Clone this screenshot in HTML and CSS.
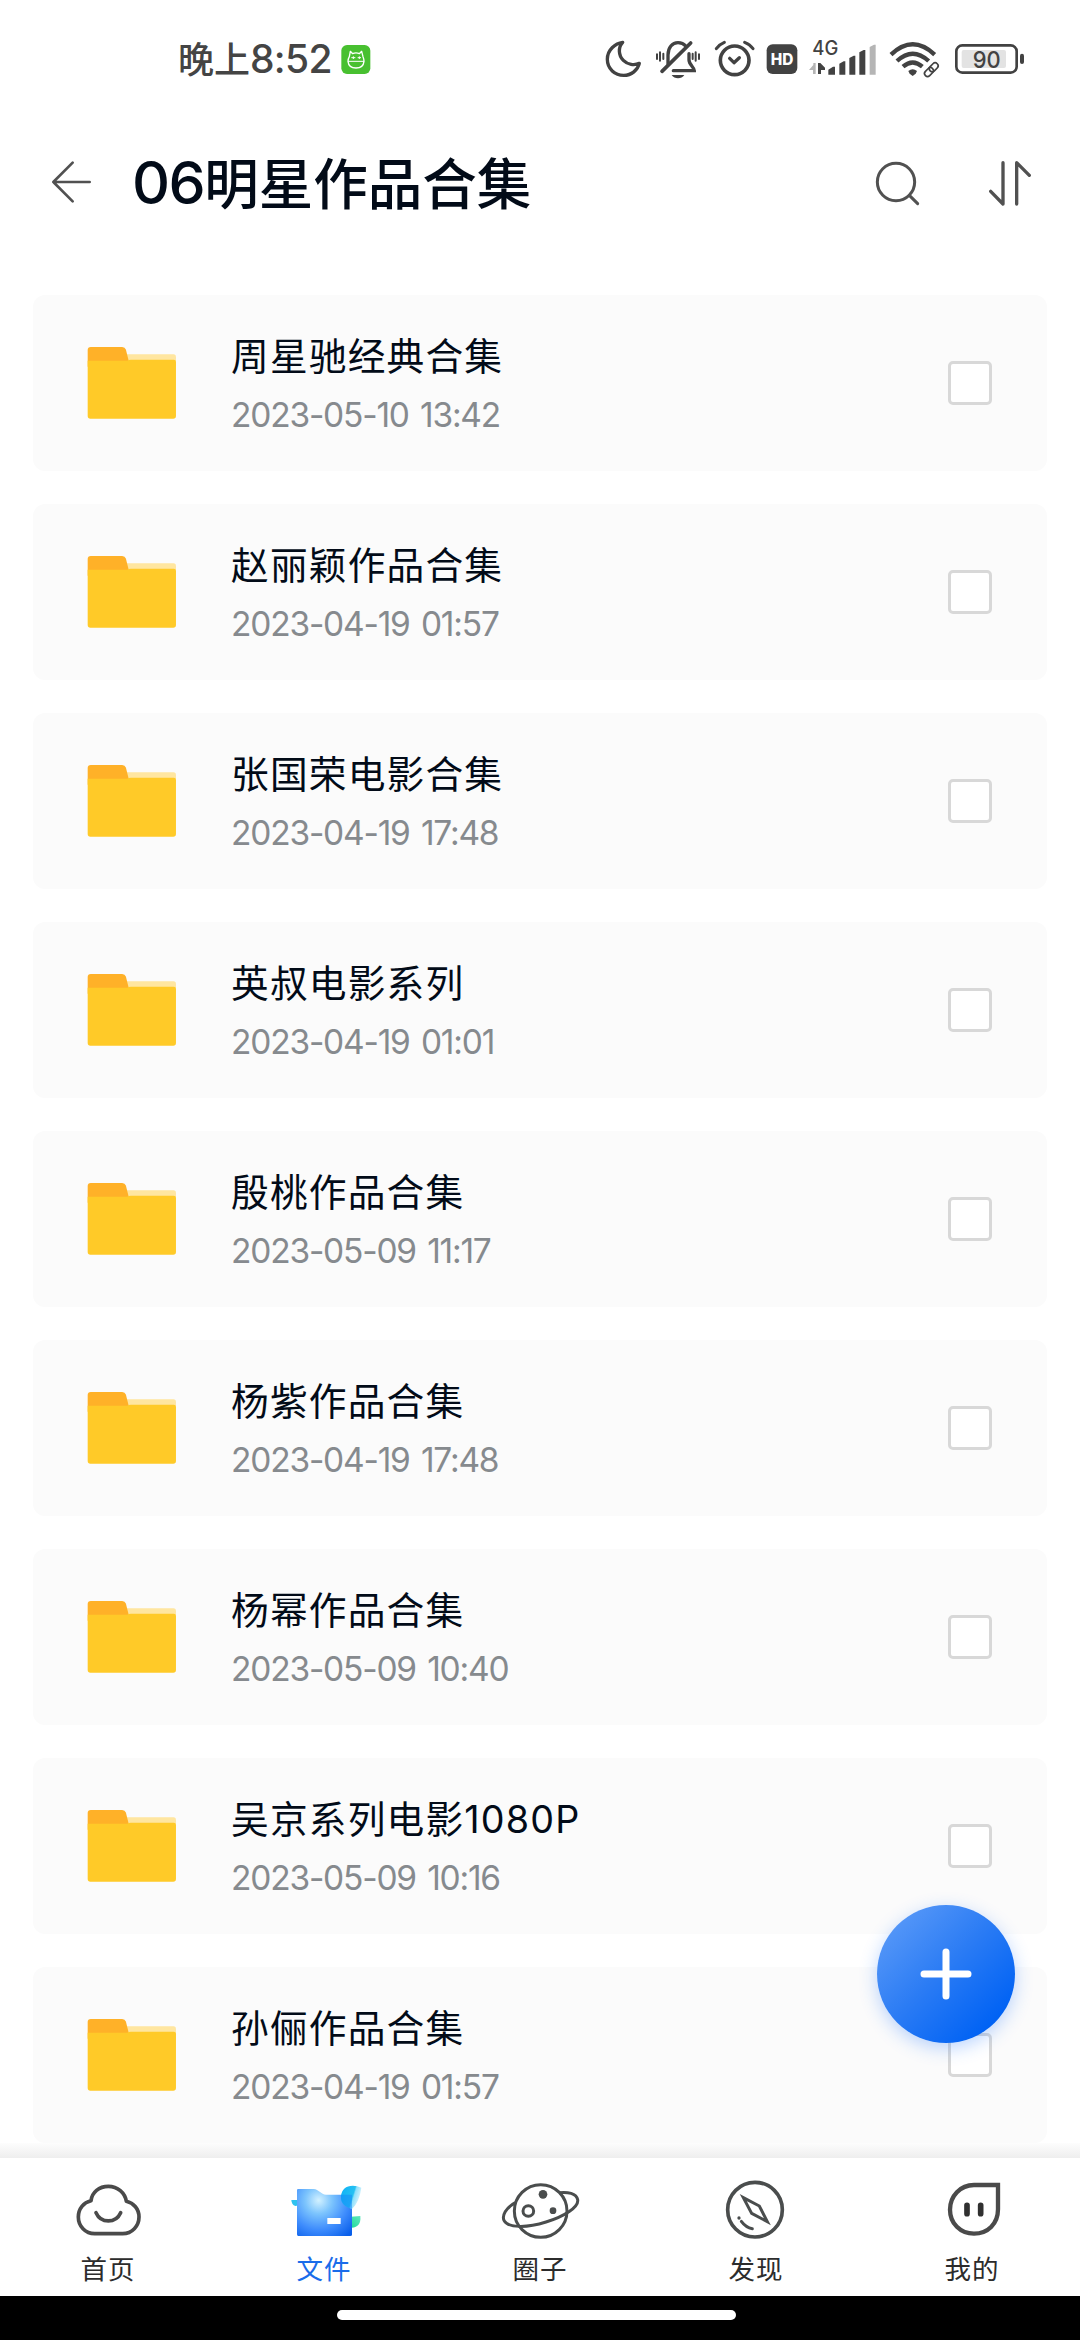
FILE: index.html
```html
<!DOCTYPE html>
<html lang="zh-CN">
<head>
<meta charset="utf-8">
<title>06明星作品合集</title>
<link rel="stylesheet" href="styles.css">
</head>
<body>
<svg class="defs" width="0" height="0" aria-hidden="true">
  <symbol id="folder" viewBox="195 198 261 222" preserveAspectRatio="none">
    <path d="M290 223H446Q453 223 453 231V260H290Z" fill="#ffe6a0"/>
    <path d="M197 260V210Q197 201 206 201H297Q305 201 308 209L316 243V260Z" fill="#ffb128"/>
    <path d="M197 242H312Q316 239 322 239H447Q453 239 453 246V408Q453 416 445 416H205Q197 416 197 408Z" fill="#ffca28"/>
  </symbol>
</svg>
<div class="screen">
  <div class="status">
    <div class="time"><span class="cjk">晚上</span>8:52</div>
    <svg class="cat" width="30" height="80" viewBox="542 0 90 240">
      <rect x="543" y="75" width="87" height="87" rx="17" fill="#48c030"/>
      <g fill="none" stroke="#fff" stroke-width="4" stroke-linejoin="round">
        <path d="M570 94L577 101Q587 96 597 101L604 94L608 110Q611 117 611 124Q609 144 587 144Q565 144 563 124Q563 117 567 110Z"/>
        <path d="M563 124H611M579 109V117M573 113H585M597 109V117M592 113H602" stroke-width="3"/>
      </g>
    </svg>
    <div class="spacer"></div>
    <svg class="moon" width="37" height="80" viewBox="45 0 111 240"><path d="M98 67C77 70 52 88 52 118C52 147 75 166 101 166C125 166 143 150 148 130C133 137 113 134 100 121C85 106 84 82 98 67Z" fill="none" stroke="#424242" stroke-width="10" stroke-linejoin="round"/></svg>
    <svg class="bell" width="48" height="80" viewBox="192 0 144 240">
      <g fill="none" stroke="#424242" stroke-linecap="round">
        <path d="M234 132V105C234 82 247 68 264 68C274 68 282 72 287 78M297 101V120C297 134 313 142 313 152H250" stroke-width="10"/>
        <path d="M216 154L302 69" stroke-width="11"/>
        <path d="M201 103V117M210 97V122M220 101V117M308 101V117M317 97V122M327 103V117" stroke-width="6"/>
      </g>
      <path d="M245 165H283Q276 175 264 175Q252 175 245 165Z" fill="#424242"/>
    </svg>
    <svg class="alarm" width="41" height="80" viewBox="372 0 123 240">
      <g fill="none" stroke="#424242" stroke-linecap="round" stroke-linejoin="round">
        <circle cx="434" cy="121" r="43" stroke-width="11"/>
        <path d="M379 86Q388 73 403 67M464 67Q480 73 489 86" stroke-width="9"/>
        <path d="M419 115L432 128L448 113" stroke-width="10"/>
      </g>
    </svg>
    <svg class="hd" width="32" height="80" viewBox="528 0 96 240">
      <rect x="530" y="73" width="92" height="89" rx="18" fill="#424242"/>
      <text x="576" y="135" text-anchor="middle" textLength="68" lengthAdjust="spacingAndGlyphs" class="hd-text">HD</text>
    </svg>
    <svg class="signal" width="69" height="80" viewBox="24 0 207 240">
      <text x="37" y="104" textLength="78" lengthAdjust="spacingAndGlyphs" class="net-text">4G</text>
      <path d="M47 129V162H39V150H27L40 135V129Z" fill="#b5b5b5"/>
      <path d="M54 162V129H61L75 143V150H63V162Z" fill="#424242"/>
      <path d="M85 164V149L99 140H105V164ZM118 164V131L131 124H136V164ZM148 164V114L161 107H166V164ZM178 164V97L191 90H196V164Z" fill="#424242"/>
      <path d="M209 164V81L222 74H227V164Z" fill="#b5b5b5"/>
    </svg>
    <svg class="wifi" width="52" height="80" viewBox="267 0 156 240">
      <g fill="none" stroke="#424242">
        <path d="M273 104Q338 42 404 104" stroke-width="13"/>
        <path d="M291 123Q338 79 386 123" stroke-width="13"/>
        <path d="M309 140Q338 115 367 140" stroke-width="13"/>
      </g>
      <path d="M325 153Q338 143 351 153L347 161L338 168L329 161Z" fill="#424242"/>
      <g fill="none" stroke="#424242" stroke-width="5" transform="rotate(-45 394 149)">
        <rect x="369" y="140" width="30" height="18" rx="9"/>
        <rect x="389" y="140" width="30" height="18" rx="9"/>
      </g>
    </svg>
    <svg class="battery" width="71" height="80" viewBox="462 0 213 240">
      <rect x="469" y="76" width="181" height="82" rx="18" fill="#fff" stroke="#424242" stroke-width="8"/>
      <rect x="485" y="90" width="133" height="54" rx="6" fill="#e3e3e3"/>
      <rect x="660" y="101" width="12" height="31" rx="6" fill="#424242"/>
      <text x="518" y="144" textLength="84" lengthAdjust="spacingAndGlyphs" class="bat-text">90</text>
    </svg>
  </div>

  <header class="header">
    <svg width="43" height="110" viewBox="60 0 129 330"><path d="M179 156H70M128 98L70 156L128 214" fill="none" stroke="#515151" stroke-width="8" stroke-linecap="round" stroke-linejoin="round"/></svg>
    <h1 class="title"><span class="latin">06</span>明星作品合集</h1>
    <svg class="search" width="46" height="110" viewBox="105 0 138 330"><g fill="none" stroke="#515151" stroke-width="9" stroke-linecap="round"><circle cx="168" cy="156" r="56"/><path d="M208 196L233 221"/></g></svg>
    <svg width="44" height="110" viewBox="444 0 132 330"><path d="M489 98V222L452 184M530 222V98L568 136" fill="none" stroke="#515151" stroke-width="10" stroke-linecap="round" stroke-linejoin="round"/></svg>
  </header>

  <main class="list">
    <div class="card"><svg class="folder"><use href="#folder"/></svg><div class="info"><div class="name">周星驰经典合集</div><div class="date">2023-05-10 13:42</div></div><span class="check"></span></div>
    <div class="card"><svg class="folder"><use href="#folder"/></svg><div class="info"><div class="name">赵丽颖作品合集</div><div class="date">2023-04-19 01:57</div></div><span class="check"></span></div>
    <div class="card"><svg class="folder"><use href="#folder"/></svg><div class="info"><div class="name">张国荣电影合集</div><div class="date">2023-04-19 17:48</div></div><span class="check"></span></div>
    <div class="card"><svg class="folder"><use href="#folder"/></svg><div class="info"><div class="name">英叔电影系列</div><div class="date">2023-04-19 01:01</div></div><span class="check"></span></div>
    <div class="card"><svg class="folder"><use href="#folder"/></svg><div class="info"><div class="name">殷桃作品合集</div><div class="date">2023-05-09 11:17</div></div><span class="check"></span></div>
    <div class="card"><svg class="folder"><use href="#folder"/></svg><div class="info"><div class="name">杨紫作品合集</div><div class="date">2023-04-19 17:48</div></div><span class="check"></span></div>
    <div class="card"><svg class="folder"><use href="#folder"/></svg><div class="info"><div class="name">杨幂作品合集</div><div class="date">2023-05-09 10:40</div></div><span class="check"></span></div>
    <div class="card"><svg class="folder"><use href="#folder"/></svg><div class="info"><div class="name">吴京系列电影<span class="latin">1080P</span></div><div class="date">2023-05-09 10:16</div></div><span class="check"></span></div>
    <div class="card"><svg class="folder"><use href="#folder"/></svg><div class="info"><div class="name">孙俪作品合集</div><div class="date">2023-04-19 01:57</div></div><span class="check"></span></div>
  </main>

  <div class="fade"></div>
  <nav class="tabs">
    <div class="tab">
      <svg width="80" height="60" viewBox="54 120 240 180"><g fill="none" stroke="#4a4a4a" stroke-width="11" stroke-linecap="round" stroke-linejoin="round"><path d="M134 281C106 281 85 258 85 231C85 206 101 187 123 182C126 157 147 139 175 139C203 139 225 158 229 184C251 189 267 207 267 231C267 258 246 281 218 281Z"/><path d="M138 218C153 251 197 251 212 218"/></g></svg>
      <span>首页</span>
    </div>
    <div class="tab active">
      <svg width="80" height="60" viewBox="702 120 240 180">
        <defs>
          <radialGradient id="g1" gradientUnits="userSpaceOnUse" cx="806" cy="181" r="135"><stop offset="0" stop-color="#d2f1ff"/><stop offset=".3" stop-color="#7cc4fd"/><stop offset=".65" stop-color="#3f8dfd"/><stop offset="1" stop-color="#0a5fea"/></radialGradient>
          <linearGradient id="g2" x1="0" y1=".3" x2="1" y2=".65"><stop offset="0" stop-color="#12b4f6"/><stop offset=".55" stop-color="#25c0f2"/><stop offset=".62" stop-color="#8fe0fb"/><stop offset="1" stop-color="#effbff"/></linearGradient>
          <linearGradient id="g3" x1="0" y1="1" x2="1" y2="0"><stop offset="0" stop-color="#20dc9c"/><stop offset="1" stop-color="#62e6bd"/></linearGradient>
        </defs>
        <path d="M724 180H750V187Q745 198 736 198Q725 195 724 180Z" fill="#2fc2ef"/>
        <path d="M903 230L931 228Q934 262 905 263Z" fill="url(#g3)"/>
        <path d="M741 150Q741 147 745 147H791Q797 147 801 150L818 161Q822 164 828 164H906V284Q906 288 901 288H745Q741 288 741 283Z" fill="url(#g1)"/>
        <path d="M934 143Q918 136 901 138C882 140 872 155 873 175C874 190 885 201 906 207Q929 184 934 143Z" fill="url(#g2)"/>
        <path d="M873 175C874 190 885 201 906 207V164H873Z" fill="#168bf8" opacity=".55"/>
        <rect x="832" y="234" width="40" height="18" fill="#fff"/>
      </svg>
      <span>文件</span>
    </div>
    <div class="tab">
      <svg width="80" height="60" viewBox="60 120 240 180"><g fill="none" stroke="#4a4d4d" stroke-width="9"><circle cx="182" cy="213" r="79"/><circle cx="145" cy="213" r="16" stroke-width="9"/><path d="M106 188C78 203 64 228 73 243C85 263 138 265 198 246C253 229 297 201 293 179C289 160 263 155 238 158"/></g><g fill="#4a4d4d"><circle cx="189" cy="163" r="13"/><circle cx="219" cy="212" r="10"/></g></svg>
      <span>圈子</span>
    </div>
    <div class="tab">
      <svg width="80" height="60" viewBox="708 120 240 180"><g fill="none" stroke="#4a4d4d"><circle cx="825" cy="209" r="82" stroke-width="11"/><path d="M790 173L838 198L862 245L815 220Z" stroke-width="9"/><path d="M784 244Q798 263 817 266" stroke-width="9" stroke-linecap="round"/></g><circle cx="777" cy="234" r="5" fill="#4a4d4d"/></svg>
      <span>发现</span>
    </div>
    <div class="tab">
      <svg width="80" height="60" viewBox="396 120 240 180"><path d="M522 135H594V208C594 252 563 281 522 281C481 281 450 250 450 209C450 168 481 135 522 135Z" fill="none" stroke="#4a4a4a" stroke-width="13"/><path d="M501 196V221M542 196V221" stroke="#303030" stroke-width="17" stroke-linecap="round"/></svg>
      <span>我的</span>
    </div>
  </nav>
  <div class="gesture"><div class="pill"></div></div>

  <button class="fab" aria-label="添加"><svg width="54" height="54" viewBox="0 0 54 54"><path d="M27 5V49M5 27H49" stroke="#fff" stroke-width="7" stroke-linecap="round"/></svg></button>
</div>
</body>
</html>
```
FILE: styles.css
```css
* { box-sizing: border-box; }
body { margin: 0; background: #fff; font-family: "Inter", "Noto Sans CJK SC", sans-serif; }
svg { display: block; flex: none; }
.defs { position: absolute; }
.screen {
  position: relative;
  display: flex;
  flex-direction: column;
  width: 1080px;
  height: 2340px;
  overflow: hidden;
  background: #fff;
}

/* status bar */
.status { display: flex; height: 130px; padding: 20px 55px 0 178px; color: #444; }
.time { height: 80px; line-height: 75px; font-size: 39px; font-weight: 500; white-space: nowrap; width: 153px; letter-spacing: -.7px; }
.time .cjk { font-size: 36px; letter-spacing: 0; font-family: "Noto Sans CJK SC", sans-serif; }
.cat { margin-left: 10px; }
.spacer { flex: 1; }
.bell, .alarm, .wifi { margin-left: 12px; }
.hd { margin-left: 11px; }
.signal { margin-left: 10px; }
.battery { margin-left: 13px; }
.hd-text { font: 800 46px "Inter", sans-serif; fill: #fff; }
.net-text { font: 500 59px "Inter", sans-serif; fill: #424242; }
.bat-text { font: 500 70px "Inter", sans-serif; fill: #424242; }

/* page header */
.header { display: flex; height: 110px; padding: 0 48px 0 50px; }
.title {
  flex: 1;
  margin: 0 0 0 39px;
  line-height: 102px;
  font-size: 54.5px;
  font-weight: 500;
  color: #020b18;
  font-family: "Noto Sans CJK SC", sans-serif;
}
.title .latin { font-family: "Inter", sans-serif; font-size: 59px; letter-spacing: -1.5px; }
.search { margin-right: 67px; }

/* folder list */
.list { display: flex; flex-direction: column; gap: 33px; height: 1903px; padding: 55px 33px 0; overflow: hidden; }
.card { display: flex; flex: none; align-items: center; height: 176px; padding: 0 55px 0 54px; border-radius: 12px; background: #fbfbfb; }
.folder { width: 90px; height: 74px; }
.info { flex: 1; margin-left: 54px; white-space: nowrap; }
.name { height: 58px; line-height: 57px; font-size: 37.7px; letter-spacing: 1.2px; color: #020b18; font-family: "Noto Sans CJK SC", sans-serif; }
.name .latin { font-family: "Inter", sans-serif; }
.date { height: 58px; line-height: 64px; font-size: 33.5px; letter-spacing: -1.2px; word-spacing: 3px; color: #868a8e; }
.check { width: 44px; height: 44px; border: 3px solid #d8d8d8; border-radius: 5px; background: #fff; }

/* bottom navigation */
.fade { flex: none; height: 15px; background: linear-gradient(#fdfdfd, #eee); }
.tabs { display: flex; height: 138px; padding-top: 22px; background: #fff; }
.tab { display: flex; flex: 1; flex-direction: column; align-items: center; font-size: 26.5px; line-height: 56px; color: #2c2c2c; letter-spacing: 1px; font-family: "Noto Sans CJK SC", sans-serif; }
.tab.active { color: #1a6cea; }
.gesture { display: flex; justify-content: center; height: 44px; padding: 14px 7px 0 0; background: #000; }
.pill { width: 399px; height: 10px; border-radius: 5px; background: #fff; }

/* floating add button */
.fab {
  position: absolute;
  left: 877px;
  top: 1905px;
  display: flex;
  align-items: center;
  justify-content: center;
  width: 138px;
  height: 138px;
  padding: 0;
  border: 0;
  border-radius: 50%;
  background: linear-gradient(135deg, #5a9af8 8%, #2a7bf4 48%, #0062f4 85%);
  box-shadow: 0 5px 18px rgba(30, 115, 255, .3);
}
```
